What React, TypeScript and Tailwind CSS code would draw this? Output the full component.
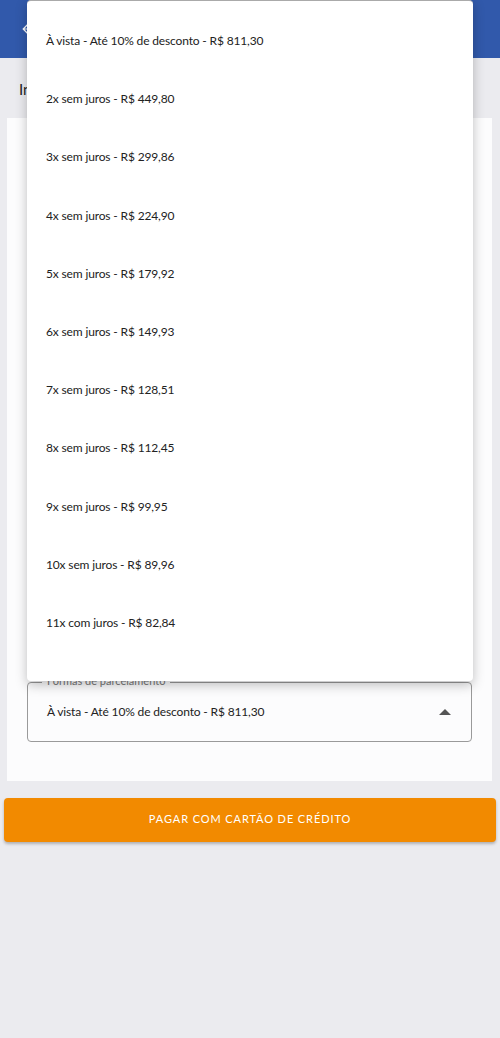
import React from 'react';

const options = [
  'À vista - Até 10% de desconto - R$ 811,30',
  '2x sem juros - R$ 449,80',
  '3x sem juros - R$ 299,86',
  '4x sem juros - R$ 224,90',
  '5x sem juros - R$ 179,92',
  '6x sem juros - R$ 149,93',
  '7x sem juros - R$ 128,51',
  '8x sem juros - R$ 112,45',
  '9x sem juros - R$ 99,95',
  '10x sem juros - R$ 89,96',
  '11x com juros - R$ 82,84',
];

export default function App() {
  return (
    <div
      className="relative min-h-[1038px] bg-[#ebebef] text-[#222]"
      style={{ fontFamily: 'Lato, "Noto Sans", sans-serif' }}
    >
      {/* Header */}
      <div className="h-[58px] bg-[#3159ab] flex items-center px-5">
        <svg width="14" height="14" viewBox="0 0 24 24" className="fill-white">
          <path d="M20 11H7.83l5.59-5.59L12 4l-8 8 8 8 1.41-1.41L7.83 13H20v-2z" />
        </svg>
      </div>

      <div className="px-[19px] pt-[20px] pb-[17px] text-[15px] text-[#222]">Informações de pagamento</div>

      {/* Card */}
      <div className="mx-[7px] w-[485px] h-[663px] bg-[#fcfcfd] flex flex-col justify-end px-[20px] pb-[39px]">
        <div className="relative h-[60px] border border-[#9a9a9a] rounded-[4px] flex items-center justify-between pl-[19px] pr-[20px]">
          <span className="absolute -top-[8px] left-[14px] px-[5px] bg-[#fcfcfd] text-[11px] text-[#777] leading-none">
            Formas de parcelamento
          </span>
          <span className="text-[12px] tracking-[-0.15px]">À vista - Até 10% de desconto - R$ 811,30</span>
          <svg width="12" height="6" viewBox="0 0 12 6" className="fill-[#555]">
            <path d="M0 6 L6 0 L12 6 Z" />
          </svg>
        </div>
      </div>

      {/* Button */}
      <div className="px-[4px] pt-[17px]">
        <button className="w-full h-[44px] rounded-[4px] bg-[#f28a00] text-white text-[11px] tracking-[0.9px] uppercase shadow-[0_2px_3px_rgba(0,0,0,0.25)]">
          Pagar com cartão de crédito
        </button>
      </div>

      {/* Dropdown menu */}
      <div className="absolute left-[27px] top-0 w-[446px] h-[681px] overflow-hidden bg-white rounded-[4px] border-t border-[#aaa] shadow-[0_4px_12px_rgba(0,0,0,0.25)] pt-[11px]">
        {options.map((o) => (
          <div key={o} className="h-[58.2px] flex items-center pl-[19px] text-[12px] tracking-[-0.15px] text-[#222]">
            {o}
          </div>
        ))}
      </div>
    </div>
  );
}
